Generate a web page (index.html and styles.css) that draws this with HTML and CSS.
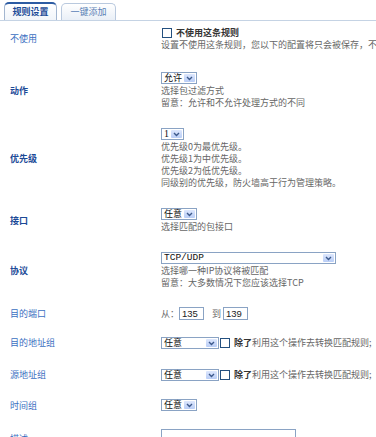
FILE: index.html
```html
<!DOCTYPE html>
<html lang="zh-CN">

<head>
    <meta charset="UTF-8">
    <meta name="viewport" content="width=device-width, initial-scale=1.0">
    <title>规则设置</title>
    <link rel="stylesheet" href="styles.css">
</head>

<body>
    <div class="tabs">
        <span class="tab active">规则设置</span>
        <span class="tab">一键添加</span>
    </div>

    <table class="form">
        <tr class="first-row">
            <td class="label">不使用</td>
            <td class="field">
                <div class="check-line">
                    <span class="checkbox"></span>
                    <strong class="check-title">不使用这条规则</strong>
                </div>
                <div class="desc">设置不使用这条规则，您以下的配置将只会被保存，不</div>
            </td>
        </tr>
        <tr>
            <td class="label strong">动作</td>
            <td class="field">
                <span class="select w-36"><span class="select-val">允许</span><span class="select-btn"><svg width="7" height="5" viewBox="0 0 7 5"><path d="M1 1l2.5 2.5L6 1" fill="none" stroke="#3d5a8c" stroke-width="1.4"/></svg></span></span>
                <div class="desc">选择包过滤方式<br>留意：允许和不允许处理方式的不同</div>
            </td>
        </tr>
        <tr>
            <td class="label strong">优先级</td>
            <td class="field">
                <span class="select w-23"><span class="select-val serif">1</span><span class="select-btn"><svg width="7" height="5" viewBox="0 0 7 5"><path d="M1 1l2.5 2.5L6 1" fill="none" stroke="#3d5a8c" stroke-width="1.4"/></svg></span></span>
                <div class="desc">优先级0为最优先级。<br>优先级1为中优先级。<br>优先级2为低优先级。<br>同级别的优先级，防火墙高于行为管理策略。</div>
            </td>
        </tr>
        <tr>
            <td class="label strong">接口</td>
            <td class="field">
                <span class="select w-36"><span class="select-val">任意</span><span class="select-btn"><svg width="7" height="5" viewBox="0 0 7 5"><path d="M1 1l2.5 2.5L6 1" fill="none" stroke="#3d5a8c" stroke-width="1.4"/></svg></span></span>
                <div class="desc">选择匹配的包接口</div>
            </td>
        </tr>
        <tr>
            <td class="label strong">协议</td>
            <td class="field">
                <span class="select w-175"><span class="select-val mono">TCP/UDP</span><span class="select-btn"><svg width="7" height="5" viewBox="0 0 7 5"><path d="M1 1l2.5 2.5L6 1" fill="none" stroke="#3d5a8c" stroke-width="1.4"/></svg></span></span>
                <div class="desc">选择哪一种IP协议将被匹配<br>留意：大多数情况下您应该选择TCP</div>
            </td>
        </tr>
        <tr class="single">
            <td class="label">目的端口</td>
            <td class="field">
                <div class="port-line">
                    <span>从：</span><span class="text-input w-25">135</span>
                    <span class="to">到</span><span class="text-input w-25">139</span>
                </div>
            </td>
        </tr>
        <tr class="single">
            <td class="label">目的地址组</td>
            <td class="field">
                <div class="check-line">
                    <span class="select w-58"><span class="select-val">任意</span><span class="select-btn"><svg width="7" height="5" viewBox="0 0 7 5"><path d="M1 1l2.5 2.5L6 1" fill="none" stroke="#3d5a8c" stroke-width="1.4"/></svg></span></span>
                    <span class="checkbox"></span>
                    <span><strong class="check-title">除了</strong>利用这个操作去转换匹配规则;</span>
                </div>
            </td>
        </tr>
        <tr class="single roomy">
            <td class="label">源地址组</td>
            <td class="field">
                <div class="check-line">
                    <span class="select w-58"><span class="select-val">任意</span><span class="select-btn"><svg width="7" height="5" viewBox="0 0 7 5"><path d="M1 1l2.5 2.5L6 1" fill="none" stroke="#3d5a8c" stroke-width="1.4"/></svg></span></span>
                    <span class="checkbox"></span>
                    <span><strong class="check-title">除了</strong>利用这个操作去转换匹配规则;</span>
                </div>
            </td>
        </tr>
        <tr class="single">
            <td class="label">时间组</td>
            <td class="field">
                <span class="select w-36"><span class="select-val">任意</span><span class="select-btn"><svg width="7" height="5" viewBox="0 0 7 5"><path d="M1 1l2.5 2.5L6 1" fill="none" stroke="#3d5a8c" stroke-width="1.4"/></svg></span></span>
            </td>
        </tr>
        <tr class="single">
            <td class="label">描述</td>
            <td class="field">
                <span class="text-input w-135 tall"></span>
            </td>
        </tr>
    </table>
</body>

</html>
```

FILE: styles.css
```css
* {
    box-sizing: border-box;
}

body {
    margin: 0;
    font-family: "Noto Sans CJK SC", "Noto Sans", sans-serif;
    font-size: 9px;
    line-height: 12px;
    color: #666;
    background-color: #fff;
    overflow: hidden;
}

/* tabs */
.tabs {
    display: flex;
    align-items: flex-end;
    gap: 4px;
    height: 21px;
    padding-left: 4px;
    border-bottom: 1px solid #c5d3e4;
}

.tab {
    width: 55px;
    height: 17px;
    line-height: 15px;
    text-align: center;
    color: #5a7fb5;
    border: 1px solid #b9c9de;
    border-bottom: none;
    border-radius: 5px 5px 0 0;
    background: linear-gradient(#ffffff, #e9eff7);
}

.tab.active {
    width: 53px;
    height: 18px;
    font-weight: bold;
    color: #1d4c98;
    border-color: #a3b6d0;
    border-top: 2px solid #2d5ca3;
    background: linear-gradient(#ffffff, #f1f5fa);
}

/* form table */
.form {
    width: 100%;
    border-collapse: collapse;
    table-layout: fixed;
}

.form td {
    padding: 9px 0 10px;
    vertical-align: middle;
}

.form .first-row td {
    padding: 6px 0 12px;
}

.form .single td {
    padding: 8px 0 9px;
}

.form .roomy td {
    padding: 11px 0 10px;
}

.label {
    width: 161px;
    padding-left: 10px !important;
    color: #3b6fc1;
}

.label.strong {
    color: #1c4a97;
    font-weight: bold;
}

.field {
    white-space: nowrap;
    overflow: hidden;
}

.desc {
    white-space: nowrap;
}

.check-line {
    display: flex;
    align-items: center;
    height: 12px;
}

.checkbox {
    display: inline-block;
    flex: none;
    width: 10px;
    height: 10px;
    margin: 0 4px 0 1px;
    border: 1px solid #24507f;
    background-color: #fff;
}

.check-title {
    color: #333;
    font-weight: bold;
}

/* select boxes */
.select {
    display: flex;
    flex: none;
    align-items: stretch;
    height: 12px;
    margin-bottom: 1px;
    border: 1px solid #8aa3c4;
    background-color: #fff;
    color: #111;
}

.check-line .select {
    margin-bottom: 0;
}

.select-val {
    flex: 1;
    padding-left: 2px;
    line-height: 10px;
}

.select-val.serif {
    font-family: "Liberation Serif", serif;
    font-size: 10px;
}

.select-val.mono {
    font-family: "Liberation Mono", monospace;
    font-size: 9.5px;
}

.select-btn {
    display: flex;
    align-items: center;
    justify-content: center;
    width: 11px;
    margin: 1px;
    border-radius: 1px;
    background: linear-gradient(#dde7fd, #b9cdf6);
}

.w-23 { width: 23px; }
.w-25 { width: 25px; }
.w-36 { width: 36px; }
.w-58 { width: 58px; }
.w-135 { width: 135px; }
.w-175 { width: 175px; }

/* text inputs */
.port-line {
    display: flex;
    align-items: center;
    height: 13px;
}

.text-input {
    display: inline-block;
    height: 13px;
    padding-left: 2px;
    line-height: 11px;
    border: 1px solid #8aa3c4;
    color: #222;
    font-family: "Liberation Sans", sans-serif;
    font-size: 9.5px;
}

.text-input.tall {
    height: 20px;
    vertical-align: top;
}

.to {
    margin: 0 2px 0 8px;
}
```
